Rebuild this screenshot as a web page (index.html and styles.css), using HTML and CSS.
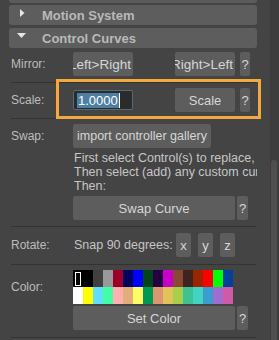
FILE: index.html
```html
<!DOCTYPE html>
<html>
<head>
<meta charset="utf-8">
<link rel="stylesheet" href="styles.css">
</head>
<body>
<div class="app">
  <div class="main">
    <div class="frame-stub"></div>
    <div class="header header-gap">
      <svg class="tri" width="10" height="10" viewBox="0 0 10 10"><polygon points="3,1 7.5,5 3,9" fill="#e6e6e6"/></svg>
      <span>Motion System</span>
    </div>
    <div class="header">
      <svg class="tri" width="10" height="10" viewBox="0 0 10 10"><polygon points="0,2 9,2 4.5,7" fill="#e6e6e6"/></svg>
      <span>Control Curves</span>
    </div>

    <div class="row row-mirror">
      <div class="label">Mirror:</div>
      <div class="controls">
        <div class="btn w60 mirror gap-big">Left&gt;Right</div>
        <div class="btn w60 mirror">Right&gt;Left</div>
        <div class="btn help help-wide">?</div>
      </div>
    </div>
    <div class="sep"></div>

    <div class="row row-scale">
      <div class="label">Scale:</div>
      <div class="controls">
        <div class="field"><span class="sel">1.0000</span><span class="caret"></span></div>
        <div class="btn w60">Scale</div>
        <div class="btn help help-wide">?</div>
      </div>
    </div>
    <div class="sep"></div>

    <div class="row row-swap">
      <div class="label">Swap:</div>
      <div class="controls col">
        <div class="btn btn-import">import controller gallery</div>
        <div class="note">
          <div>First select Control(s) to replace,</div>
          <div>Then select (add) any custom curve</div>
          <div>Then:</div>
        </div>
        <div class="line">
          <div class="btn w162">Swap Curve</div>
          <div class="btn help">?</div>
        </div>
      </div>
    </div>
    <div class="sep"></div>

    <div class="row row-rotate">
      <div class="label">Rotate:</div>
      <div class="controls">
        <div class="snap">Snap 90 degrees:</div>
        <div class="btn axis">x</div>
        <div class="btn axis">y</div>
        <div class="btn axis">z</div>
      </div>
    </div>
    <div class="sep"></div>

    <div class="row row-color">
      <div class="label label-color">Color:</div>
      <div class="controls col">
        <div class="palette">
          <div class="cell" style="background:#000000"><span class="marker"></span></div>
          <div class="cell" style="background:#000000"></div>
          <div class="cell" style="background:#404040"></div>
          <div class="cell" style="background:#999999"></div>
          <div class="cell" style="background:#9b0028"></div>
          <div class="cell" style="background:#000460"></div>
          <div class="cell" style="background:#0000ff"></div>
          <div class="cell" style="background:#004619"></div>
          <div class="cell" style="background:#260043"></div>
          <div class="cell" style="background:#c800c8"></div>
          <div class="cell" style="background:#8a4833"></div>
          <div class="cell" style="background:#3f231f"></div>
          <div class="cell" style="background:#992600"></div>
          <div class="cell" style="background:#ff0000"></div>
          <div class="cell" style="background:#00ff00"></div>
          <div class="cell" style="background:#004199"></div>
          <div class="cell" style="background:#ffffff"></div>
          <div class="cell" style="background:#ffff00"></div>
          <div class="cell" style="background:#64dcff"></div>
          <div class="cell" style="background:#43ffa3"></div>
          <div class="cell" style="background:#ffb0b0"></div>
          <div class="cell" style="background:#e4ac79"></div>
          <div class="cell" style="background:#ffff63"></div>
          <div class="cell" style="background:#009954"></div>
          <div class="cell" style="background:#dd9670"></div>
          <div class="cell" style="background:#e0c45a"></div>
          <div class="cell" style="background:#a8cf4b"></div>
          <div class="cell" style="background:#3ec295"></div>
          <div class="cell" style="background:#42d3c3"></div>
          <div class="cell" style="background:#3c9cd0"></div>
          <div class="cell" style="background:#a06ccf"></div>
          <div class="cell" style="background:#d05aa8"></div>
        </div>
        <div class="line line-color">
          <div class="btn w162">Set Color</div>
          <div class="btn help">?</div>
        </div>
      </div>
    </div>
    <div class="sep"></div>
  </div>
  <div class="scrollbar"><div class="thumb"></div></div>
  <div class="focus-box"></div>
</div>
</body>
</html>
```

FILE: styles.css
```css
* { box-sizing: border-box; }
html, body { margin: 0; padding: 0; }
body {
  background: #444444;
  font-family: "Liberation Sans", Arial, sans-serif;
  font-size: 12px;
  color: #c4c4c4;
}
.app {
  position: relative;
  display: flex;
  width: 279px;
  height: 340px;
  overflow: hidden;
}
.main {
  width: 270px;
  padding-left: 9px;
  display: flex;
  flex-direction: column;
}
.frame-stub {
  width: 248px;
  height: 3px;
  background: #5b5b5b;
  border-radius: 0 0 3px 3px;
  margin-bottom: 2px;
}
.header {
  width: 248px;
  height: 20px;
  background: #5d5d5d;
  border-radius: 3px;
  display: flex;
  align-items: center;
  padding-left: 8px;
  font-weight: bold;
  font-size: 13px;
  color: #b9b9b9;
}
.header-gap { margin-bottom: 3px; }
.tri {
  align-self: flex-start;
  margin-top: 3px;
  margin-right: 15px;
  flex: none;
}
.row {
  display: flex;
  align-items: flex-start;
}
.row-mirror { padding: 4px 0 6px; }
.row-scale { padding: 5px 0 6px; }
.row-swap { padding: 5px 0 6px; }
.row-rotate { padding: 6px 0 7px; }
.row-color { padding: 5px 0 7px; }
.label {
  width: 62px;
  margin-left: 2px;
  flex: none;
  line-height: 24px;
  color: #bcbcbc;
}
.label-color { line-height: 34px; }
.controls {
  width: 184px;
  display: flex;
  align-items: flex-start;
  overflow: hidden;
}
.col { flex-direction: column; }
.line { display: flex; }
.btn {
  height: 24px;
  background: #5d5d5d;
  border-radius: 2px;
  color: #d6d6d6;
  display: flex;
  align-items: center;
  justify-content: center;
  white-space: nowrap;
  overflow: hidden;
  flex: none;
}
.w60 { width: 60px; font-size: 13px; }
.mirror { font-size: 13.5px; justify-content: flex-end; padding-right: 2px; }
.gap-big { margin-right: 42px; }
.row-scale .w60 { margin-left: 42px; }
.help { width: 11px; margin-left: 2px; font-size: 13px; }
.help-wide { width: 10px; margin-left: 5px; }
.field {
  width: 60px;
  height: 20px;
  margin-top: 2px;
  background: #2b2b2b;
  border: 1px solid #56697a;
  border-radius: 2px;
  display: flex;
  align-items: center;
  padding-left: 3px;
  flex: none;
}
.sel {
  background: #4f7ea3;
  color: #ffffff;
  font-size: 13px;
  line-height: 15px;
  padding: 0 1px;
}
.caret {
  width: 1px;
  height: 15px;
  background: #ffffff;
}
.btn-import { width: 138px; padding: 0 4px; font-size: 12.5px; }
.note {
  margin-top: 3px;
  padding-left: 1px;
  line-height: 14px;
  white-space: nowrap;
  color: #c6c6c6;
  font-size: 12.5px;
}
.line { margin-top: 3px; }
.line-color { margin-top: 2px; }
.w162 { width: 162px; font-size: 13px; }
.snap {
  width: 103px;
  padding-left: 1px;
  line-height: 24px;
  font-size: 12.5px;
  color: #c4c4c4;
  white-space: nowrap;
  flex: none;
}
.axis { width: 15px; margin-right: 7px; font-size: 13px; }
.palette {
  width: 160px;
  display: grid;
  grid-template-columns: repeat(16, 10px);
  grid-template-rows: 17px 17px;
}
.cell { position: relative; }
.marker {
  position: absolute;
  left: 2px;
  top: 2px;
  width: 6px;
  height: 14px;
  border: 1px solid #ffffff;
}
.sep {
  width: 245px;
  height: 1px;
  margin-left: 2px;
  background: #333333;
  flex: none;
}
.scrollbar {
  width: 9px;
  background: #3d3d3d;
  padding-top: 160px;
  padding-left: 1px;
  flex: none;
}
.thumb {
  width: 6px;
  height: 100%;
  background: #4e4e4e;
  border-radius: 3px 3px 0 0;
}
.focus-box {
  position: absolute;
  left: 56px;
  top: 79px;
  width: 205px;
  height: 40px;
  border: 3px solid #f4a940;
}
```
